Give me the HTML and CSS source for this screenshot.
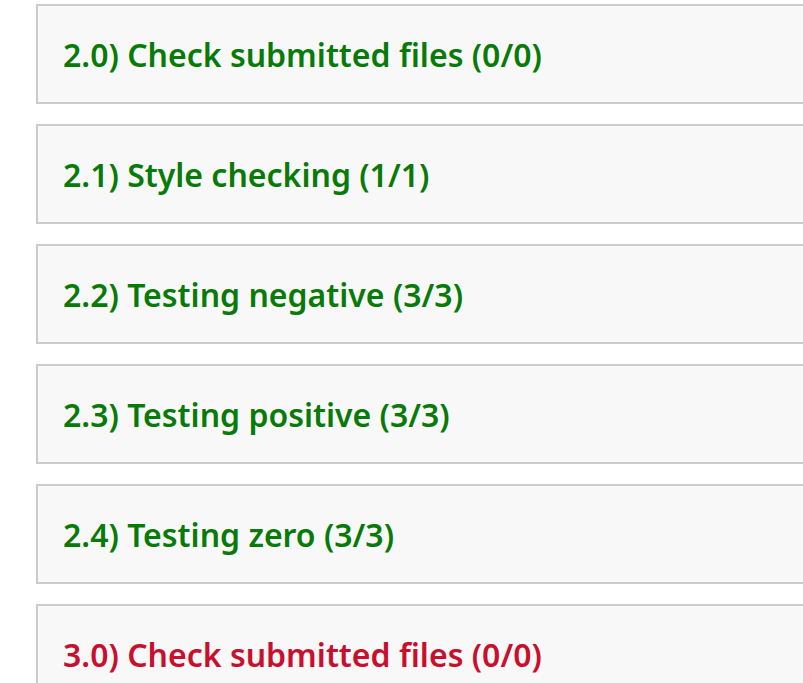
FILE: index.html
```html
<!DOCTYPE html>
<html>
<head>
<meta charset="utf-8">
<link rel="stylesheet" href="styles.css">
</head>
<body>
<div class="list">
  <div class="item pass"><span class="title">2.0) Check submitted files (0/0)</span></div>
  <div class="item pass"><span class="title">2.1) Style checking (1/1)</span></div>
  <div class="item pass"><span class="title">2.2) Testing negative (3/3)</span></div>
  <div class="item pass"><span class="title">2.3) Testing positive (3/3)</span></div>
  <div class="item pass"><span class="title">2.4) Testing zero (3/3)</span></div>
  <div class="item fail"><span class="title">3.0) Check submitted files (0/0)</span></div>
</div>
</body>
</html>
```
FILE: styles.css
```css
html, body {
  margin: 0;
  padding: 0;
  overflow: hidden;
  background: #ffffff;
}
body {
  font-family: "Noto Sans", "Open Sans", sans-serif;
}
.list {
  display: flex;
  flex-direction: column;
  gap: 20px;
  padding: 4px 0 0 36px;
  width: 840px;
}
.item {
  box-sizing: border-box;
  height: 100px;
  border: 2px solid #cccccc;
  background: #f8f8f8;
  display: flex;
  align-items: center;
  padding: 0 25px;
}
.title {
  font-size: 32px;
  font-weight: 600;
}
.pass .title { color: #087a08; }
.fail .title { color: #c8102e; }
```
